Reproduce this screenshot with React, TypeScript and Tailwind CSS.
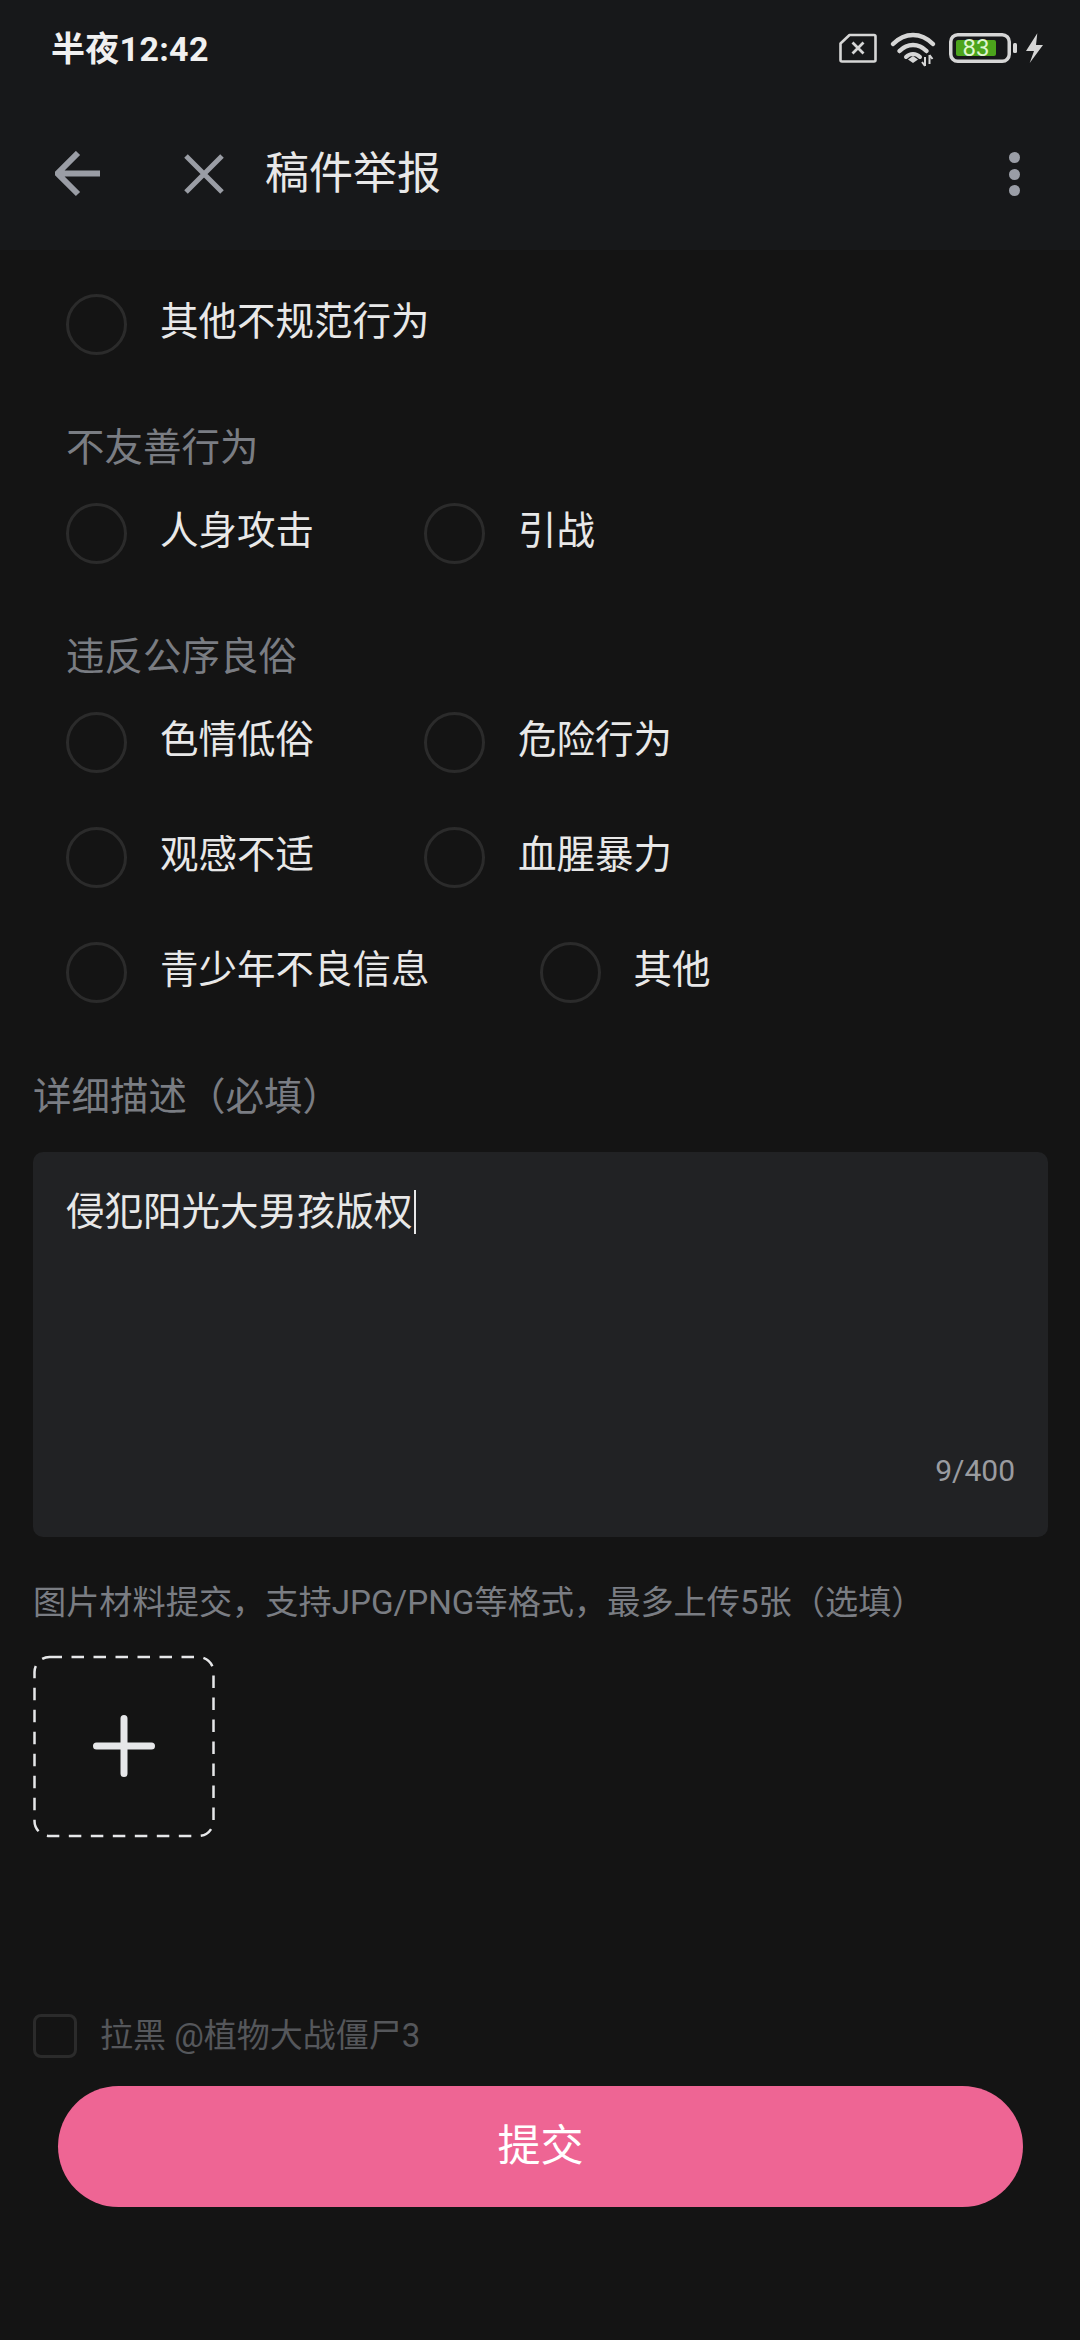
import React from "react";

const font = { fontFamily: '"Roboto", "Noto Sans CJK SC", sans-serif' };

function Radio({ label }: { label: string }) {
  return (
    <div className="flex items-center gap-[33px]">
      <div className="w-[61px] h-[61px] rounded-full border-[3px] border-[#2b2b2b]" />
      <span className="text-[38.500px] leading-[52px] pb-[5px] text-[#e8e8e8]">{label}</span>
    </div>
  );
}

function Row({ items, className = "" }: { items: string[]; className?: string }) {
  return (
    <div className={`flex gap-[110px] ${className}`}>
      {items.map((i) => (
        <Radio key={i} label={i} />
      ))}
    </div>
  );
}

function StatusIcons() {
  return (
    <div className="flex items-start">
      <svg width="204" height="36" viewBox="0 0 204 36" fill="none" className="block">
        {/* sim with x */}
        <path d="M10.500 4H35a1.500 1.500 0 0 1 1.500 1.500v23.500a1.500 1.500 0 0 1-1.500 1.500H3a1.500 1.500 0 0 1-1.500-1.500V12.500Z" stroke="#d6d6d6" strokeWidth="2.600" strokeLinejoin="round" />
        <path d="M13.500 11.500l11 11M24.500 11.500l-11 11" stroke="#d6d6d6" strokeWidth="2.800" />
        {/* wifi */}
        <path d="M54 13c12-12 28-12 40 0" stroke="#d6d6d6" strokeWidth="4.500" strokeLinecap="round" />
        <path d="M60.500 20c8-8 19-8 27 0" stroke="#d6d6d6" strokeWidth="4.500" strokeLinecap="round" />
        <path d="M67 26c4-4 10-4 14 0" stroke="#d6d6d6" strokeWidth="4" strokeLinecap="round" />
        <path d="M69 28.500 74 25l5 3.500-5 3.500Z" fill="#d6d6d6" />
        <path d="M86 26v9M83 31l3 4M90.500 24v9M90.500 24l3 4" stroke="#d6d6d6" strokeWidth="2" />
        {/* battery */}
        <rect x="111.750" y="3.750" width="58.500" height="26.500" rx="7" stroke="#d6d6d6" strokeWidth="3.500" />
        <rect x="117" y="9" width="40" height="16" rx="2" fill="#4ca41c" />
        <rect x="174" y="12" width="4" height="10" rx="1.500" fill="#d6d6d6" />
        {/* bolt */}
        <path d="M198.300 2.300 187 20h8l-4.300 12L204 14h-7Z" fill="#d6d6d6" />
      </svg>
    </div>
  );
}

export default function App() {
  return (
    <div className="w-[1080px] h-[2340px] bg-[#141414] flex flex-col overflow-hidden" style={font}>
      <header className="h-[250px] bg-[#17181a] shrink-0 flex flex-col">
        <div className="h-[100px] flex justify-between pl-[51px] pr-[37px] pt-[29px]">
          <span className="text-[34px] leading-[40px] font-bold tracking-[0.3px] text-[#f0f0f0]">半夜12:42</span>
          <div className="pt-[2px]">
            <div className="relative">
              <StatusIcons />
              <span className="absolute left-[117px] top-[5px] w-[40px] text-center text-[24px] leading-[24px] text-[#dff5cf]">83</span>
            </div>
          </div>
        </div>
        <div className="h-[150px] flex items-center pl-[55px] pr-[60px] pb-[2px]">
          <svg width="46" height="46" viewBox="0 0 46 46" fill="none" className="shrink-0">
            <path d="M45 22.500H3M23 2 2.500 22.500 23 43" stroke="#9a9da5" strokeWidth="6" />
          </svg>
          <svg width="40" height="40" viewBox="0 0 40 40" fill="none" className="ml-[83px] shrink-0">
            <path d="M2 2l36 36M38 2 2 38" stroke="#9a9da5" strokeWidth="5" />
          </svg>
          <span className="ml-[41px] text-[44px] leading-[56px] text-[#e8e8e8]">稿件举报</span>
          <div className="ml-auto flex flex-col gap-[5.500px]">
            <div className="w-[11px] h-[11px] rounded-full bg-[#9a9da6]" />
            <div className="w-[11px] h-[11px] rounded-full bg-[#9a9da6]" />
            <div className="w-[11px] h-[11px] rounded-full bg-[#9a9da6]" />
          </div>
        </div>
      </header>

      <main className="flex-1 flex flex-col">
        <div className="px-[66px] pt-[44px] flex flex-col">
          <Row items={["其他不规范行为"]} />
          <div className="mt-[67px] text-[38.500px] leading-[52px] text-[#7a7d83]">不友善行为</div>
          <Row items={["人身攻击", "引战"]} className="mt-[29px]" />
          <div className="mt-[67px] text-[38.500px] leading-[52px] text-[#7a7d83]">违反公序良俗</div>
          <Row items={["色情低俗", "危险行为"]} className="mt-[29px]" />
          <Row items={["观感不适", "血腥暴力"]} className="mt-[54px]" />
          <Row items={["青少年不良信息", "其他"]} className="mt-[54px]" />
        </div>

        <div className="px-[33px]">
          <div className="mt-[68px] text-[38.500px] leading-[52px] text-[#7a7d83]">详细描述（必填）</div>
          <div className="mt-[29px] h-[385px] w-[1015px] rounded-[10px] bg-[#212224] px-[33px] pt-[34px] flex flex-col">
            <div className="flex items-center text-[38.500px] leading-[52px] text-[#e8e8e8]">
              侵犯阳光大男孩版权
              <div className="w-[2px] h-[44px] bg-[#e8e8e8] ml-[1px]" />
            </div>
            <div className="mt-auto mb-[48px] text-right text-[30px] leading-[36px] text-[#9a9ca0]">9/400</div>
          </div>
          <div className="mt-[43px] text-[33.200px] leading-[46px] text-[#7a7d83]">图片材料提交，支持JPG/PNG等格式，最多上传5张（选填）</div>
          <svg width="184" height="184" viewBox="0 0 184 184" fill="none" className="block mt-[29px]">
            <rect x="1.500" y="2" width="179" height="179" rx="15" stroke="#e6e7e9" strokeWidth="2.500" strokeDasharray="12.500 9.500" />
            <path d="M91 63.500v55M63.500 91h55" stroke="#e6e7e9" strokeWidth="7" strokeLinecap="round" />
          </svg>
          <div className="mt-[175px] flex items-center gap-[23px]">
            <div className="w-[44px] h-[44px] rounded-[8px] border-[3px] border-[#2b2b2b]" />
            <span className="text-[33px] leading-[44px] text-[#55575b]">拉黑 @植物大战僵尸3</span>
          </div>
        </div>
        <button className="mt-[28px] ml-[58px] w-[965px] h-[121px] rounded-full bg-[#ee6594] text-white text-[43px]">提交</button>
      </main>
    </div>
  );
}
